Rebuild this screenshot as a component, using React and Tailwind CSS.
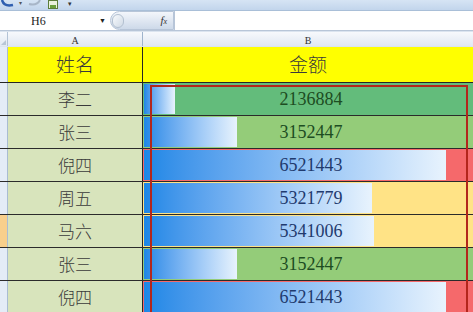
const rows = [
  { name: '李二', value: '2136884', bar: 31, fill: '#63bc7b', ink: '#1d4d22' },
  { name: '张三', value: '3152447', bar: 93, fill: '#94cc79', ink: '#1d4d22' },
  { name: '倪四', value: '6521443', bar: 302, fill: '#f5696b', ink: '#1f3a6e' },
  { name: '周五', value: '5321779', bar: 228, fill: '#ffe386', ink: '#1f3a6e' },
  { name: '马六', value: '5341006', bar: 230, fill: '#ffe386', ink: '#1f3a6e', selected: true },
  { name: '张三', value: '3152447', bar: 93, fill: '#94cc79', ink: '#1d4d22' },
  { name: '倪四', value: '6521443', bar: 302, fill: '#f5696b', ink: '#1f3a6e' },
]

const cjk = { fontFamily: '"Noto Sans CJK SC", "Noto Sans", sans-serif' }

function Toolbar() {
  return (
    <div className="h-[11px] flex items-start bg-gradient-to-b from-[#d6e4f4] to-[#c2d5ec] border-b border-[#a9bfd8]">
      {/* undo */}
      <svg width="16" height="10" viewBox="0 0 16 10" className="ml-[1px]">
        <path d="M1 0 Q3 7 12 5" stroke="#2f5fb0" strokeWidth="2.5" fill="none" />
      </svg>
      <span className="text-[6px] leading-[6px] text-[#555] ml-[2px]">▾</span>
      {/* redo (disabled) */}
      <svg width="16" height="10" viewBox="0 0 16 10" className="ml-[4px]">
        <path d="M14 0 Q11 6 3 4" stroke="#a8b6c8" strokeWidth="2" fill="none" />
      </svg>
      {/* sheet icon */}
      <div className="ml-[6px] w-[10px] h-[9px] border border-[#5c7d3a] bg-[#eaf2dc] flex items-end justify-center">
        <div className="w-[6px] h-[3px] bg-[#6aa03c]" />
      </div>
      <span className="text-[7px] leading-[7px] text-[#333] ml-[10px]">▾</span>
    </div>
  )
}

function NameBar() {
  return (
    <div className="h-[20px] flex items-stretch bg-white border-b border-[#b8c6d8]">
      <div className="w-[110px] flex items-center">
        <span className="ml-[31px] text-[12px] leading-none text-[#222]" style={{ fontFamily: '"Liberation Serif", serif' }}>H6</span>
        <span className="ml-auto mr-[4px] text-[7px] leading-none text-[#222]">▼</span>
      </div>
      <div className="w-[64px] flex items-center rounded-l-full bg-gradient-to-b from-[#f3f6fb] to-[#cdd9e9] border border-[#b7c5d8]">
        <div className="w-[12px] h-[14px] ml-[1px] rounded-full border border-[#b3c0d0] bg-gradient-to-br from-[#f8fafc] to-[#d0dae6]" />
        <span className="ml-auto mr-[6px] text-[11px] italic leading-none text-[#333]" style={{ fontFamily: '"Liberation Serif", serif' }}>
          f<span className="text-[8px]">x</span>
        </span>
      </div>
      <div className="flex-1 bg-white border-l border-[#b7c5d8]" />
    </div>
  )
}

function ColumnHeaders() {
  const letter = { fontFamily: '"Liberation Serif", serif' }
  return (
    <div className="h-[16px] flex border-t border-[#dbe4ef] bg-gradient-to-b from-[#f7f9fc] to-[#e1e8f2] border-b border-[#9fb4cc]">
      <div className="w-[8px] flex items-end justify-end border-r border-[#b3c3d6]">
        <div className="w-0 h-0 border-l-[5px] border-l-transparent border-b-[5px] border-b-[#b8c6d6] mb-[1px] mr-[1px]" />
      </div>
      <div className="w-[135px] flex items-center justify-center pt-[2px] text-[10px] text-[#333] border-r border-[#9fb4cc]" style={letter}>A</div>
      <div className="flex-1 flex items-center justify-center pt-[2px] text-[10px] text-[#333]" style={letter}>B</div>
    </div>
  )
}

export default function App() {
  return (
    <div className="relative w-[473px] h-[312px] overflow-hidden bg-white">
      <Toolbar />
      <NameBar />
      <ColumnHeaders />

      {/* header row */}
      <div className="h-[36px] flex border-b border-[#262626]">
        <div className="w-[8px] bg-[#e4ecf7] border-r border-[#a9bcd2]" />
        <div className="w-[135px] bg-[#ffff00] flex items-center justify-center text-[19px] font-light text-[#3a3a3a] border-r border-[#262626]" style={cjk}>
          姓名
        </div>
        <div className="flex-1 bg-[#ffff00] flex items-center justify-center text-[19px] font-light text-[#3a3a3a]" style={cjk}>
          金额
        </div>
      </div>

      {rows.map((r, i) => (
        <div key={i} className="h-[33px] flex border-b border-[#2b2b2b]">
          <div className={`w-[8px] border-r border-[#a9bcd2] ${r.selected ? 'bg-[#f8cf8c]' : 'bg-[#e4ecf7]'}`} />
          <div className="w-[135px] bg-[#d8e4bc] flex items-center justify-center text-[17px] font-light text-[#3a3a3a] border-r border-[#262626]" style={cjk}>
            {r.name}
          </div>
          <div className="flex-1 grid" style={{ backgroundColor: r.fill }}>
            <div className="col-start-1 row-start-1 flex py-[1px] pl-[1px]">
              <div className="h-full bg-gradient-to-r from-[#1b87e6] to-[#e8f3fd]" style={{ width: r.bar }} />
            </div>
            <div
              className="col-start-1 row-start-1 flex items-center justify-center text-[18px] pl-[6px]"
              style={{ fontFamily: '"Liberation Serif", serif', color: r.ink }}
            >
              {r.value}
            </div>
          </div>
        </div>
      ))}

      {/* selection rectangle */}
      <div className="absolute left-[150px] top-[85px] w-[318px] h-[240px] border-2 border-[#b3261c] pointer-events-none" />
    </div>
  )
}
